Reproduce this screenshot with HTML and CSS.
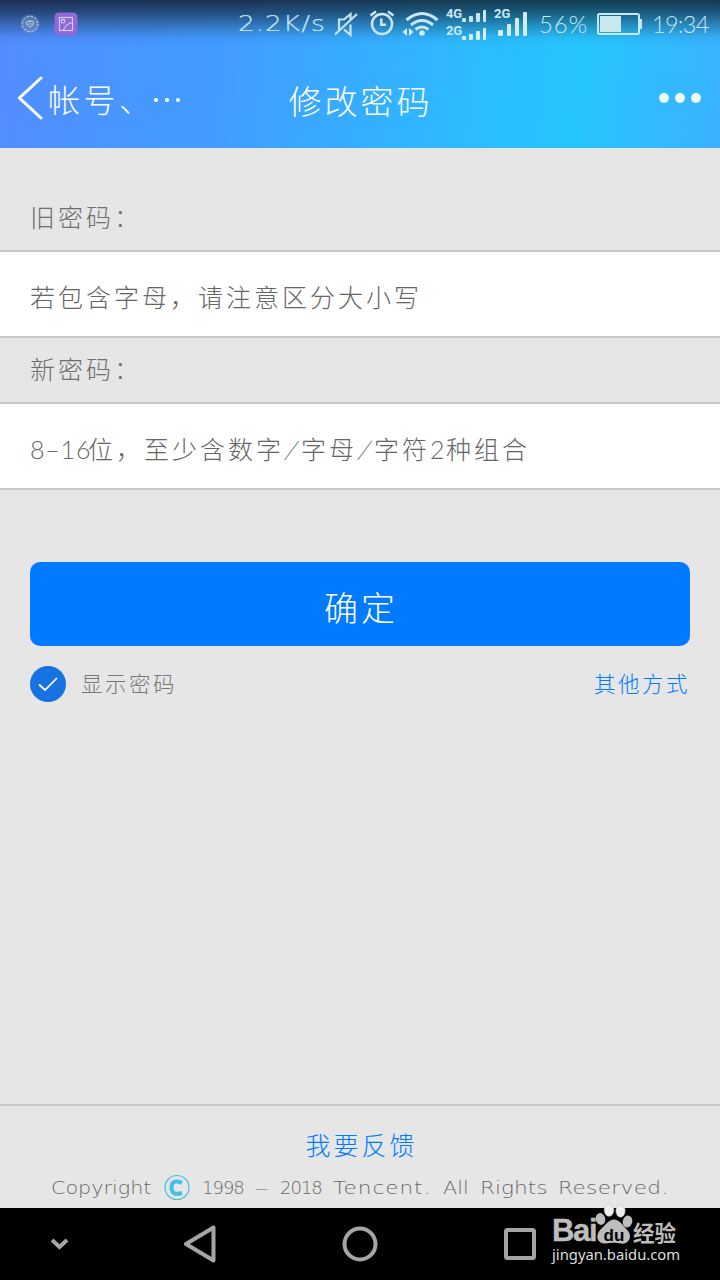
FILE: index.html
```html
<!DOCTYPE html>
<html lang="zh-CN">
<head>
<meta charset="utf-8">
<title>修改密码</title>
<link rel="stylesheet" href="styles.css">
</head>
<body>
<div class="screen">
  <header class="header">
    <div class="status">
      <svg class="st-app" width="20" height="20" viewBox="0 0 20 20" fill="none" stroke="#c3d5e7"><circle cx="10" cy="10" r="9.5" fill="#7895bd" fill-opacity=".5" stroke="none"/><circle cx="10" cy="10" r="7.6" stroke-dasharray="2.5 1.5" stroke-width="1"/><path d="M6 8q2-2 4 0q2-2 4 0q0 3-4 5q-4-2-4-5M7 10h6M8 7h5" stroke-width=".8"/></svg>
      <svg class="st-pic" width="24" height="24" viewBox="0 0 24 24" fill="none" stroke="#d6cbf3" stroke-width="1.2"><rect x=".5" y=".5" width="23" height="23" rx="4.5" fill="#9068d7" stroke="none"/><rect x="5.5" y="5.5" width="13" height="13"/><circle cx="9" cy="9.2" r="1.8"/><path d="M9.5 18q2-6 9-7.5"/></svg>
      <span class="speed">2.2K/s</span>
      <svg class="st-mute" width="24" height="26" viewBox="0 0 24 26" fill="none" stroke="#c8e2f2" stroke-width="2.2"><path d="M1 23.5 23 3M5 19V8.5h5L16.5 3v6M16.5 13.5V24L10 18.5"/></svg>
      <svg class="st-alarm" width="26" height="26" viewBox="0 0 26 26" fill="none" stroke="#c8e6f5" stroke-width="2.5"><circle cx="13" cy="14" r="10"/><path d="M12.3 8.5v6.3H17M1.5 5.5 7 1.5M19 1.5l5.5 4" /></svg>
      <svg class="st-wifi" width="37" height="26" viewBox="0 0 37 26" fill="none" stroke="#c8e8f7" stroke-width="3"><path d="M4.5 9q15.500-13 31 0M9 14q11-9 22 0M13.500 18.500q6.500-5 13 0"/><circle cx="20" cy="22" r="2.800" fill="#d2efff" stroke="none"/><path d="M5 17v8L.5 21ZM7 17v8l4.500-4Z" fill="#d2efff" stroke="none"/></svg>
      <div class="sim sim-dual">
        <div class="sim-row"><span>4G</span><svg width="24" height="14" viewBox="0 0 24 14" fill="#c8e8f7"><rect x="0" y="8" width="4" height="4" rx="1"/><rect x="7" y="6" width="4" height="6" rx="1"/><rect x="14" y="3" width="4" height="9" rx="1"/><rect x="21" y="0" width="4" height="12" rx="1"/></svg></div>
        <div class="sim-row"><span>2G</span><svg width="24" height="14" viewBox="0 0 24 14" fill="#d2efff"><rect x="0" y="9" width="4" height="4" rx="1"/><rect x="7" y="7" width="4" height="6" rx="1"/><rect x="14" y="4" width="4" height="9" rx="1"/><rect x="21" y="1" width="4" height="12" rx="1"/></svg></div>
      </div>
      <div class="sim sim-single"><span>2G</span><svg width="30" height="26" viewBox="0 0 30 26" fill="#d0eefb"><rect x="0" y="19" width="5" height="6" rx="1"/><rect x="9" y="13" width="4" height="12" rx="1"/><rect x="17" y="7" width="4" height="18" rx="1"/><rect x="25" y="1" width="4" height="24" rx="1"/></svg></div>
      <span class="percent">56%</span>
      <svg class="st-bat" width="45" height="22" viewBox="0 0 45 22"><rect x="1" y="1" width="41" height="20" rx="1.500" fill="none" stroke="#c8e8f7" stroke-width="2"/><path d="M3 3h21v16H3ZM42 6h3v10h-3Z" fill="#c8e8f0"/></svg>
      <span class="clock">19:34</span>
    </div>
    <div class="titlebar">
      <div class="back"><svg width="26" height="44" viewBox="0 0 26 44" fill="none" stroke="#fff" stroke-width="3" stroke-linecap="round"><path d="M23 2 1.500 22 23 42"/></svg><span>帐号、</span><i></i><i></i><i></i></div>
      <h1 class="title">修改密码</h1>
      <div class="more"><i></i><i></i><i></i></div>
    </div>
  </header>
  <main class="form">
    <div class="label label-first">旧密码：</div>
    <div class="field">若包含字母，请注意区分大小写</div>
    <div class="label">新密码：</div>
    <div class="field"><span class="num">8–16</span>位，至少含数字<span class="slash">/</span>字母<span class="slash">/</span>字符<span class="two">2</span>种组合</div>
    <div class="submit">确定</div>
    <div class="options">
      <div class="show"><svg width="36" height="36" viewBox="0 0 36 36"><circle cx="18" cy="18" r="18" fill="#1772e2"/><path d="M9 18.500 15 24 27 12" fill="none" stroke="#fff" stroke-width="1.700"/></svg><span>显示密码</span></div>
      <span class="other">其他方式</span>
    </div>
  </main>
  <footer class="footer">
    <div class="feedback">我要反馈</div>
    <div class="copyright"><span class="w1">Copyright</span><svg class="c-mark" width="26" height="26" viewBox="0 0 26 26" fill="none" stroke="#42c0ea"><circle cx="13" cy="12.500" r="12" stroke-width="1.200"/><path d="M18 7.800Q7.500 3.800 7.500 12.500T18 18" stroke-width="4"/></svg><span class="w2">1998</span><span class="w3">–</span><span class="w4">2018</span><span class="w5">Tencent.</span><span class="w6">All</span><span class="w7">Rights</span><span class="w8">Reserved.</span></div>
  </footer>
  <nav class="nav">
    <svg class="n-down" width="19" height="12" viewBox="0 0 19 12" fill="none" stroke="#a5a5a5" stroke-width="4"><path d="m2 2 7.500 7L17 2"/></svg>
    <svg class="n-back" width="34" height="38" viewBox="0 0 34 38" fill="none" stroke="#a5a5a5" stroke-width="4" stroke-linejoin="round"><path d="M30.500 2.500v33L3 19Z"/></svg>
    <svg class="n-home" width="36" height="36" viewBox="0 0 36 36" fill="none" stroke="#a5a5a5" stroke-width="4"><circle cx="18" cy="18" r="15.500"/></svg>
    <svg class="n-recent" width="32" height="32" viewBox="0 0 32 32" fill="none" stroke="#a5a5a5" stroke-width="4"><rect x="2" y="2" width="28" height="28" rx="1.500"/></svg>
    <div class="watermark">
      <div class="brand"><span class="bai">Bai</span><div class="paw"><svg width="38" height="42" viewBox="0 0 38 42" fill="#bdbdbd"><ellipse cx="5.500" cy="16" rx="4.700" ry="6" transform="rotate(-12 5.500 16)"/><ellipse cx="14" cy="7" rx="4.800" ry="6.300" fill="#eee" stroke="#bbb" stroke-width=".6"/><ellipse cx="25.500" cy="8" rx="4.600" ry="6.200" fill="#eee" stroke="#bbb" stroke-width=".6"/><ellipse cx="32.500" cy="18.500" rx="4.700" ry="6" transform="rotate(15 32.500 18.500)"/><path d="M11 21Q19 12 27 21l6 7c5 6 0 14-7 12.500q-7-1.500-15 0C2 41 0 33 5 27Z"/></svg><span class="du">du</span></div><span class="jingyan">经验</span></div>
      <div class="site">jingyan.baidu.com</div>
    </div>
  </nav>
</div>
</body>
</html>
```
FILE: styles.css
```css
* { box-sizing: border-box; }
body { margin: 0; font-family: Lato, "Noto Sans CJK SC", sans-serif; font-weight: 300; }
svg { display: block; flex: none; }
.screen { width: 720px; height: 1280px; display: flex; flex-direction: column; background: #e6e6e6; overflow: hidden; }
.header { height: 148px; flex: none; background: linear-gradient(to bottom, rgba(15,25,40,.8) 0, rgba(15,28,42,.62) 12px, rgba(15,35,50,.3) 26px, rgba(15,35,50,.05) 38px, transparent 46px), linear-gradient(97deg, #528cff 0, #419dff 32%, #2dbaff 64%, #26c5ff 80%, #3bb1ff 100%); }
.status { height: 48px; padding-left: 20px; display: flex; align-items: center; color: #cbe6f4; white-space: nowrap; }
.status > * { flex: none; }
.st-pic { margin-left: 14px; }
.speed { width: 88px; margin-left: 160px; font: 200 22px/52px "DejaVu Sans", sans-serif; letter-spacing: .8px; transform: scaleX(1.2); transform-origin: left; -webkit-text-stroke: .2px #cbe6f4; }
.st-mute { margin-left: 8px; }
.st-alarm { margin-left: 11px; margin-top: -2px; }
.st-wifi { margin-left: 7px; }
.sim { font: 700 13px/14px Roboto, sans-serif; color: #c8e8f7; }
.sim-dual { width: 41px; margin-left: 7px; height: 34px; }
.sim-row { height: 17px; display: flex; }
.sim-row span { width: 16px; flex: none; letter-spacing: -.2px; }
.sim-row svg { margin-top: 3px; }
.sim-single { width: 38px; height: 34px; margin-left: 7px; display: grid; }
.sim-single > * { grid-area: 1 / 1; }
.sim-single svg { margin: 4px 0 0 4px; }
.percent { width: 50px; margin-left: 7px; font: 300 24px/48px Lato, sans-serif; letter-spacing: .8px; }
.st-bat { margin-left: 8px; }
.clock { margin-left: 10px; font: 300 23.5px/48px Lato, sans-serif; letter-spacing: -.7px; }
.titlebar { height: 100px; padding: 0 19px 0 18px; display: grid; grid-template-columns: 1fr auto 1fr; align-items: center; color: #fff; }
.back { display: flex; align-items: center; font-size: 32px; letter-spacing: 3.5px; }
.back span { width: 106px; margin: 4px 0 0 4px; white-space: nowrap; line-height: 44px; }
.back i { width: 4px; height: 4px; border-radius: 50%; background: #fff; margin: 3px 7px 0 0; }
.title { margin: 5px 0 0 2px; font-size: 33px; font-weight: 300; line-height: 44px; letter-spacing: 3px; }
.more { display: flex; gap: 6px; justify-content: flex-end; }
.more i { width: 10px; height: 10px; border-radius: 50%; background: #f0fbff; }
.form { flex: 1; }
.label { height: 64px; padding-left: 30px; color: #6f6f6f; font-size: 25px; letter-spacing: 3px; line-height: 62px; }
.label-first { height: 102px; padding-top: 38px; }
.field { height: 88px; padding-left: 30px; background: #fff; border: solid #c8c7cc; border-width: 2px 0; color: #666; font-size: 25px; letter-spacing: 3px; line-height: 90px; white-space: nowrap; }
.num, .slash, .two { display: inline-block; letter-spacing: .8px; }
.num { width: 58px; }
.slash { width: 17px; text-align: center; transform: skewX(-18deg); }
.two { width: 16px; }
.submit { height: 84px; margin: 72px 30px 0; border-radius: 10px; background: #007aff; color: #fff; font-size: 34px; line-height: 92px; letter-spacing: 3px; text-align: center; padding-left: 2px; }
.options { margin: 20px 30px 0; height: 36px; display: flex; justify-content: space-between; font-size: 21.5px; line-height: 36px; letter-spacing: 2.5px; color: #777; }
.show { display: flex; gap: 15px; }
.other { color: #007aff; }
.footer { height: 104px; flex: none; border-top: 2px solid #c8c8c8; color: #666; }
.feedback { height: 60px; line-height: 78px; color: #007aff; font-size: 25px; letter-spacing: 3px; text-align: center; padding-left: 3px; }
.copyright { height: 44px; padding-left: 51px; display: flex; align-items: center; font: 200 18px/40px "DejaVu Sans", sans-serif; white-space: nowrap; }
.copyright span { flex: none; transform-origin: left; }
.w1 { width: 113px; transform: scaleX(1.15); }
.c-mark { margin-right: 12px; }
.w2 { width: 53px; letter-spacing: -1px; }
.w3 { width: 25px; transform: scaleX(1.5); }
.w4 { width: 53px; letter-spacing: -1px; }
.w5 { width: 110px; letter-spacing: .8px; transform: scaleX(1.2); }
.w6 { width: 37px; transform: scaleX(1.15); }
.w7 { width: 78px; transform: scaleX(1.2); }
.w8 { letter-spacing: .3px; transform: scaleX(1.2); }
.nav { height: 72px; flex: none; background: #000; padding-left: 50px; display: flex; align-items: center; }
.n-back { margin-left: 114px; }
.n-home { margin-left: 125px; }
.n-recent { margin-left: 126px; }
.watermark { margin-left: 16px; height: 72px; color: #bdbdbd; white-space: nowrap; }
.brand { height: 38px; display: flex; }
.bai { width: 43px; margin-top: 9px; font: 700 31px/28px "Liberation Sans", sans-serif; letter-spacing: -1.3px; -webkit-text-stroke: .4px #bdbdbd; }
.paw { width: 38px; height: 42px; margin-top: -5px; display: grid; }
.paw > * { grid-area: 1 / 1; z-index: 1; }
.du { align-self: end; justify-self: center; color: #000; font: 700 17px/19px "Liberation Sans", sans-serif; }
.jingyan { height: 28px; margin-top: 10px; font-family: "Noto Sans CJK SC", sans-serif; font-size: 21.5px; font-weight: 700; line-height: 27px; }
.site { font: 400 14.8px/17px "Noto Sans", sans-serif; color: #ddd; }
```
